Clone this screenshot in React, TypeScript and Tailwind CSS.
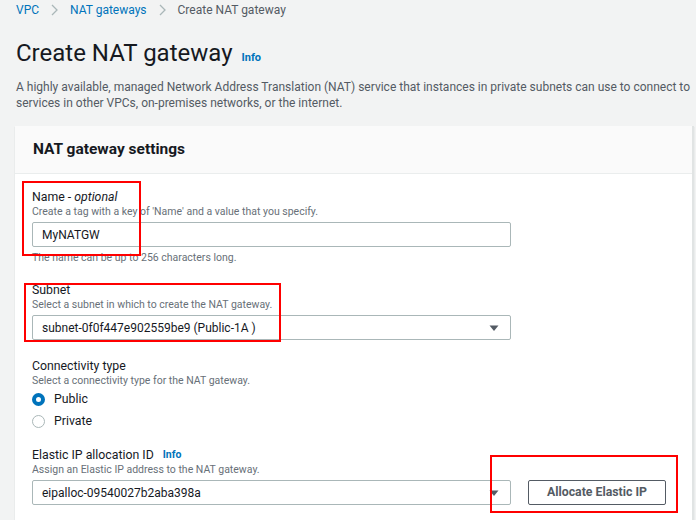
import React from "react";

function Caret() {
  return (
    <svg width="10" height="8" viewBox="0 0 10 8" className="shrink-0">
      <path d="M0.5 1.5 H9.5 L5 7 Z" fill="#545b64" />
    </svg>
  );
}

function Chevron() {
  return (
    <svg width="7" height="12" viewBox="0 0 7 12" className="shrink-0">
      <path d="M1 1 L6 6 L1 11" stroke="#aab7b8" strokeWidth="1.3" fill="none" />
    </svg>
  );
}

export default function App() {
  const font = { fontFamily: "Roboto, 'Open Sans', Arial, sans-serif" };
  return (
    <div className="w-[696px] h-[520px] overflow-hidden bg-[#f2f3f3] text-[#16191f]" style={font}>
      <div className="pl-4">
        {/* breadcrumb */}
        <div className="h-[20px] flex items-center text-[12px] gap-[12px]">
          <span className="text-[#0073bb]">VPC</span>
          <Chevron />
          <span className="text-[#0073bb]">NAT gateways</span>
          <Chevron />
          <span className="text-[#545b64]">Create NAT gateway</span>
        </div>
        {/* title */}
        <div className="mt-[16px] flex items-baseline gap-[9px]">
          <h1 className="text-[24px] leading-[34px] font-normal text-[#16191f]">Create NAT gateway</h1>
          <span className="text-[11px] font-bold text-[#0073bb]">Info</span>
        </div>
        <p className="mt-[9px] text-[12px] leading-[16px] text-[#545b64]">
          A highly available, managed Network Address Translation (NAT) service that instances in private subnets can use to connect to services in other VPCs, on-premises networks, or the internet.
        </p>
      </div>
      {/* card */}
      <div className="ml-[15px] mr-[2px] mt-[15px] bg-white border-r-2 border-[#e1e4e4] shadow-[0_1px_1px_rgba(0,28,36,0.2)]">
        <div className="h-[48px] bg-[#fafafa] border-b border-[#eaeded] flex items-center pl-[18px]">
          <h2 className="text-[15.5px] font-bold text-[#16191f]">NAT gateway settings</h2>
        </div>
        <div className="pl-[17px] pt-[15px] pb-6">
          {/* Name */}
          <div className="relative">
            <div className="absolute left-[-10px] top-[-8px] w-[119px] h-[75px] border-2 border-[#ff0000] z-10" />
            <div className="text-[12.3px] leading-[16px] text-[#16191f]">Name - <i>optional</i></div>
            <div className="text-[10.5px] leading-[14px] text-[#687078]">Create a tag with a key of 'Name' and a value that you specify.</div>
            <div className="mt-[3px] w-[479px] h-[25px] border border-[#aab7b8] rounded-[2px] flex items-center pl-[9px] text-[12px]">MyNATGW</div>
            <div className="mt-[4px] text-[10.5px] leading-[14px] text-[#687078]">The name can be up to 256 characters long.</div>
          </div>
          {/* Subnet */}
          <div className="relative mt-[17px]">
            <div className="absolute left-[-8px] top-[1px] w-[257px] h-[59px] border-2 border-[#ff0000] z-10" />
            <div className="text-[12.3px] leading-[16px]">Subnet</div>
            <div className="text-[10.5px] leading-[14px] text-[#687078]">Select a subnet in which to create the NAT gateway.</div>
            <div className="mt-[3px] w-[479px] h-[25px] border border-[#aab7b8] rounded-[2px] flex items-center pl-[9px] pr-[11px] text-[12px] justify-between">
              <span>subnet-0f0f447e902559be9 (Public-1A )</span>
              <Caret />
            </div>
          </div>
          {/* Connectivity */}
          <div className="mt-[18px]">
            <div className="text-[12.3px] leading-[16px]">Connectivity type</div>
            <div className="text-[10.5px] leading-[14px] text-[#687078]">Select a connectivity type for the NAT gateway.</div>
            <div className="flex items-center gap-[9px] h-[22px] text-[12.3px]">
              <span className="w-[13px] h-[13px] rounded-full border-[4px] border-[#0073bb] bg-white" />
              <span>Public</span>
            </div>
            <div className="flex items-center gap-[9px] h-[22px] text-[12.3px]">
              <span className="w-[13px] h-[13px] rounded-full border border-[#aab7b8] bg-white" />
              <span>Private</span>
            </div>
          </div>
          {/* Elastic IP */}
          <div className="mt-[15px] relative">
            <div className="flex items-center gap-[9px] h-[16px]">
              <span className="text-[12.3px] leading-[16px]">Elastic IP allocation ID</span>
              <span className="text-[10.5px] leading-[16px] font-bold text-[#0073bb]">Info</span>
            </div>
            <div className="text-[10.5px] leading-[14px] text-[#687078]">Assign an Elastic IP address to the NAT gateway.</div>
            <div className="mt-[3px] flex items-center gap-[17px]">
              <div className="w-[479px] h-[25px] border border-[#aab7b8] rounded-[2px] flex items-center pl-[9px] pr-[11px] text-[12px] justify-between">
                <span>eipalloc-09540027b2aba398a</span>
                <Caret />
              </div>
              <div className="w-[138px] h-[25px] border border-[#545b64] rounded-[2px] flex items-center justify-center text-[12.3px] font-bold text-[#545b64]">Allocate Elastic IP</div>
            </div>
            <div className="absolute left-[458px] top-[8px] w-[188px] h-[58px] border-2 border-[#ff0000] z-10" />
          </div>
        </div>
      </div>
    </div>
  );
}
